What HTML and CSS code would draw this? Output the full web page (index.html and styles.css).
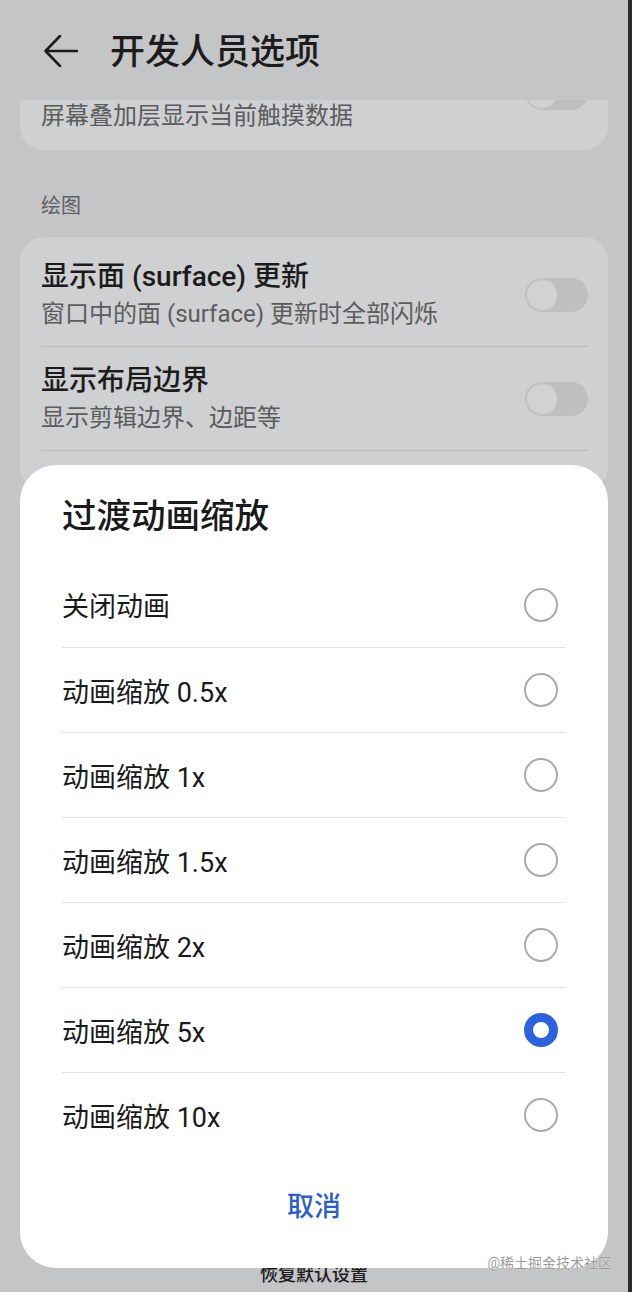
FILE: index.html
```html
<!DOCTYPE html>
<html lang="zh-CN">
<head>
    <meta charset="UTF-8">
    <meta name="viewport" content="width=device-width, initial-scale=1.0">
    <title>开发人员选项</title>
    <link rel="stylesheet" href="styles.css">
</head>
<body>
    <div class="screen">
        <div class="phone">
            <header class="topbar">
                <svg class="back" width="34" height="32" viewBox="0 0 34 32">
                    <path d="M16 1 L1.5 16 L16 31 M1.5 16 H33" fill="none" stroke="#1c1c1c" stroke-width="2.6" stroke-linecap="round" stroke-linejoin="round"/>
                </svg>
                <h1 class="page-title">开发人员选项</h1>
            </header>

            <div class="content">
                <div class="card card-scrolled">
                    <div class="row-sub">屏幕叠加层显示当前触摸数据</div>
                    <span class="toggle toggle-clipped"></span>
                </div>

                <div class="section-label">绘图</div>

                <div class="card card-main">
                    <div class="row">
                        <div class="row-text">
                            <div class="row-title">显示面 (surface) 更新</div>
                            <div class="row-sub">窗口中的面 (surface) 更新时全部闪烁</div>
                        </div>
                        <span class="toggle"></span>
                    </div>
                    <div class="row">
                        <div class="row-text">
                            <div class="row-title">显示布局边界</div>
                            <div class="row-sub">显示剪辑边界、边距等</div>
                        </div>
                        <span class="toggle"></span>
                    </div>
                </div>
            </div>

            <div class="footer">恢复默认设置</div>

            <div class="dialog">
                <h2 class="dialog-title">过渡动画缩放</h2>
                <ul class="options" id="options"></ul>
                <div class="cancel">取消</div>
            </div>

            <div class="watermark">@稀土掘金技术社区</div>
        </div>
        <div class="edge"></div>
    </div>

    <script>
        const labels = ['关闭动画', '动画缩放 0.5x', '动画缩放 1x', '动画缩放 1.5x', '动画缩放 2x', '动画缩放 5x', '动画缩放 10x'];
        const selected = 5;
        const list = document.getElementById('options');

        labels.forEach((text, i) => {
            const li = document.createElement('li');
            li.classList.add('option');
            const label = document.createElement('span');
            label.textContent = text;
            const radio = document.createElement('span');
            radio.classList.add('radio');
            if (i === selected) radio.classList.add('on');
            li.appendChild(label);
            li.appendChild(radio);
            list.appendChild(li);
        });
    </script>
</body>
</html>
```

FILE: styles.css
```css
body {
    margin: 0;
    padding: 0;
    background: #2a2c2c;
    font-family: Roboto, "Noto Sans CJK SC", sans-serif;
}

.screen {
    display: flex;
    width: 632px;
    height: 1292px;
}

.phone {
    position: relative;
    width: 628px;
    height: 1292px;
    background: #c4c5c7;
    display: flex;
    flex-direction: column;
    overflow: hidden;
}

.edge {
    width: 4px;
    background: #2a2c2c;
}

/* Header */
.topbar {
    height: 100px;
    display: flex;
    align-items: center;
    padding: 6px 0 0 44px;
    gap: 32px;
    box-sizing: border-box;
    flex-shrink: 0;
    position: relative;
    z-index: 2;
    background: #c4c5c7;
}

.back {
    display: block;
    margin-top: -4px;
}

.page-title {
    margin: 0;
    font-size: 35px;
    font-weight: 500;
    color: #1c1c1c;
    line-height: 44px;
}

/* Settings list behind the dialog */
.content {
    flex: 1;
    overflow: hidden;
    padding: 0 20px;
}

.card {
    background: #cfd0d1;
    border-radius: 24px;
    padding: 6px 20px 0 21px;
}

.card-scrolled {
    display: flex;
    align-items: flex-start;
    justify-content: space-between;
    margin-top: -30px;
    padding: 30px 20px 18px 21px;
}

.card-main {
    padding-bottom: 40px;
}

.row {
    display: flex;
    align-items: center;
    justify-content: space-between;
    padding: 16px 0;
    border-bottom: 1px solid #b9babb;
}

.row-title {
    font-size: 28px;
    line-height: 36px;
    font-weight: 500;
    color: #1c1c1c;
}

.row-sub {
    font-size: 24px;
    line-height: 32px;
    margin-top: 3px;
    color: #5b5c5d;
}

.card-scrolled .row-sub {
    margin-top: 0;
}

.section-label {
    font-size: 20px;
    line-height: 28px;
    color: #5f6061;
    padding: 42px 0 0 21px;
    margin-bottom: 17px;
}

.toggle {
    position: relative;
    width: 63px;
    height: 34px;
    border-radius: 17px;
    background: #bebfc0;
    flex-shrink: 0;
}

.toggle-clipped {
    margin-top: -24px;
}

.toggle::before {
    content: '';
    position: absolute;
    left: 1px;
    top: 1px;
    width: 30px;
    height: 30px;
    border-radius: 50%;
    background: #d1d2d3;
    border: 1px solid #c3c4c5;
}

.footer {
    height: 36px;
    padding-top: 7px;
    box-sizing: border-box;
    text-align: center;
    font-size: 18px;
    line-height: 24px;
    font-weight: 500;
    color: #1c1c1c;
    flex-shrink: 0;
}

/* Dialog */
.dialog {
    position: absolute;
    left: 20px;
    top: 465px;
    width: 588px;
    height: 803px;
    box-sizing: border-box;
    background: #ffffff;
    border-radius: 36px;
    padding: 29px 42px 0 42px;
    z-index: 3;
}

.dialog-title {
    margin: 0 0 24px;
    font-size: 34.5px;
    line-height: 44px;
    font-weight: 500;
    color: #1a1a1a;
}

.options {
    list-style: none;
    margin: 0;
    padding: 0;
}

.option {
    height: 84px;
    display: flex;
    align-items: center;
    justify-content: space-between;
    padding-right: 8px;
    font-size: 27px;
    color: #1a1a1a;
    border-top: 1px solid #e2e2e2;
}

.option:first-child {
    height: 85px;
    border-top: none;
}

.radio {
    width: 34px;
    height: 34px;
    box-sizing: border-box;
    border-radius: 50%;
    border: 2px solid #ababab;
}

.radio.on {
    border: 9px solid #2b62e0;
}

.cancel {
    margin-top: 30px;
    text-align: center;
    font-size: 27px;
    line-height: 40px;
    font-weight: 500;
    color: #2b5fcf;
}

.watermark {
    position: absolute;
    right: 16px;
    top: 1253px;
    font-size: 14px;
    line-height: 20px;
    color: #9c9d9e;
    text-shadow: 0 0 1px #ffffff;
    z-index: 4;
}
```
